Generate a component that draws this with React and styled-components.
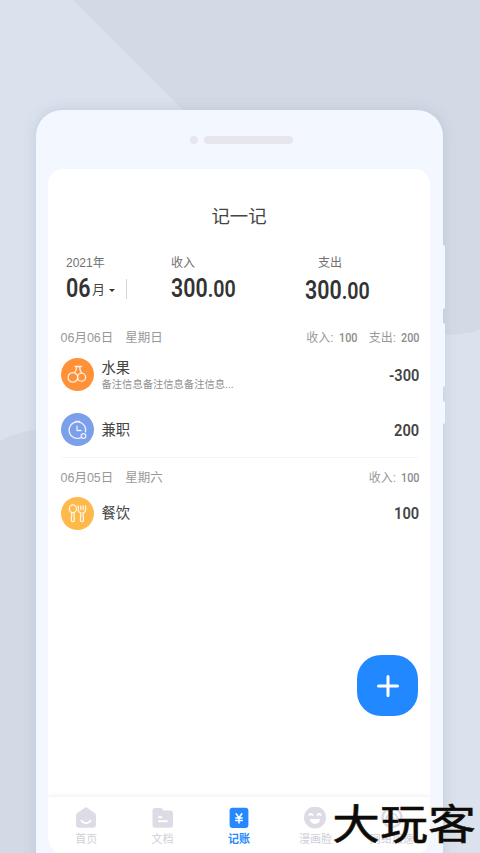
import React from 'react';
import styled, { createGlobalStyle } from 'styled-components';

const days = [
  {
    date: '06月06日',
    weekday: '星期日',
    totals: [
      { label: '收入:', value: '100' },
      { label: '支出:', value: '200' },
    ],
    records: [
      {
        icon: 'fruit',
        color: '#ff9138',
        name: '水果',
        note: '备注信息备注信息备注信息...',
        amount: '-300',
      },
      { icon: 'clock', color: '#7b9fea', name: '兼职', amount: '200' },
    ],
  },
  {
    date: '06月05日',
    weekday: '星期六',
    totals: [{ label: '收入:', value: '100' }],
    records: [{ icon: 'food', color: '#ffb94a', name: '餐饮', amount: '100' }],
  },
];

const tabs = [
  { icon: 'home', label: '首页' },
  { icon: 'folder', label: '文档' },
  { icon: 'money', label: '记账', active: true },
  { icon: 'face', label: '漫画脸' },
  { icon: 'speed', label: '网络加速' },
];

const recordIcons = {
  fruit: (
    <>
      <path d="M14 8.5h6.5M15.6 8.7c.1 2.5-.6 4.2-2 5.8M18.7 8.7c-.1 2.5.6 4.2 1.8 6" />
      <circle cx="11.9" cy="19.4" r="4.8" />
      <circle cx="20.6" cy="19.2" r="4" />
    </>
  ),
  clock: (
    <>
      <path d="M14.5 8.3h4M19.5 24.8a8.3 8.3 0 1 1 5-6" />
      <path d="M16 13.2v4.3h4" />
      <circle cx="22.5" cy="23" r="2.3" />
    </>
  ),
  food: (
    <>
      <ellipse cx="11.9" cy="11.8" rx="3.5" ry="3.9" />
      <path d="M10.8 15.8l-.5 7.2a1.5 1.5 0 0 0 3.1 0l-.5-7.2" />
      <path d="M17.3 9v4c0 1.7 1 2.6 2.6 2.9l-.5 7.1a1.5 1.5 0 0 0 3.1 0l-.5-7.1c1.6-.3 2.6-1.2 2.6-2.9V9M19.8 9v3.5M22.2 9v3.5" />
    </>
  ),
};

const tabIcons = {
  home: (
    <>
      <path
        d="M9.4.9a2.5 2.5 0 0 1 3.2 0l7 5.1c1 .7 1.4 1.5 1.4 2.6v9.2a3 3 0 0 1-3 3H4a3 3 0 0 1-3-3V8.6c0-1.1.4-1.9 1.4-2.6z"
        fill="currentColor"
      />
      <path d="M6.5 13.8c2 3.2 7 3.2 9 0" stroke="#fff" strokeWidth="2" />
    </>
  ),
  folder: (
    <>
      <path
        d="M3 1h5c1 0 1.7.3 2.3 1l1.2 1.6h7a2.5 2.5 0 0 1 2.5 2.5v12a2.7 2.7 0 0 1-2.7 2.7H3.2A2.7 2.7 0 0 1 .5 18V3.5A2.5 2.5 0 0 1 3 1z"
        fill="currentColor"
      />
      <path d="M7 10.3h2.5M7 14.3h8" stroke="#fff" strokeWidth="1.9" />
    </>
  ),
  money: (
    <>
      <rect x="1.6" y=".7" width="18.8" height="20.3" rx="3" fill="currentColor" />
      <path
        d="M8.2 6.8l2.8 3.9 2.8-3.9M11 10.7v5.3M7.8 11h6.400M7.8 13.6h6.4"
        stroke="#fff"
        strokeWidth="1.5"
      />
    </>
  ),
  face: (
    <>
      <circle cx="11" cy="10.5" r="11" fill="currentColor" />
      <path d="M6 12h10c-.2 6.5-9.8 6.5-10 0z" fill="#fff" />
      <path d="M5.3 8c.8-1.3 2.4-1.3 3.2 0M13.5 8c.8-1.3 2.4-1.3 3.2 0" stroke="#fff" strokeWidth="1.9" />
    </>
  ),
  speed: (
    <>
      <circle cx="11" cy="10.5" r="9.5" stroke="currentColor" strokeWidth="2.5" />
      <path d="M5.5 12a5.5 5.5 0 0 1 11 0" stroke="currentColor" strokeWidth="2" />
      <circle cx="11" cy="12" r="2.5" fill="currentColor" />
    </>
  ),
};

function DaySection({ day }) {
  return (
    <Day>
      <DayHeader>
        <DayDate>
          <span>{day.date}</span>
          <span>{day.weekday}</span>
        </DayDate>
        <Totals>
          {day.totals.map((total) => (
            <Total key={total.label}>
              {total.label}
              <TotalValue>{total.value}</TotalValue>
            </Total>
          ))}
        </Totals>
      </DayHeader>
      {day.records.map((record) => (
        <Record key={record.name}>
          <RecordIcon $color={record.color}>
            <svg width="33" height="33" viewBox="0 0 33 33">
              {recordIcons[record.icon]}
            </svg>
          </RecordIcon>
          <RecordText>
            <RecordName>{record.name}</RecordName>
            {record.note && <RecordNote>{record.note}</RecordNote>}
          </RecordText>
          <Amount>{record.amount}</Amount>
        </Record>
      ))}
    </Day>
  );
}

function App() {
  return (
    <>
      <GlobalStyle />
      <Page>
        <Phone>
          <SideKey $top={135} $height={64} />
          <SideKey $top={213} $height={64} />
          <SideKey $top={291} $height={23} />
          <Speaker>
            <Camera />
            <Slot />
          </Speaker>
          <Screen>
            <Title>记一记</Title>
            <Summary>
              <MonthPicker>
                <SummaryLabel>2021年</SummaryLabel>
                <Month>
                  <Digits>06</Digits>
                  <MonthUnit>月</MonthUnit>
                  <Caret />
                </Month>
              </MonthPicker>
              <SummaryItem $width={134}>
                <SummaryLabel>收入</SummaryLabel>
                <Sum>
                  300<small>.00</small>
                </Sum>
              </SummaryItem>
              <SummaryItem $width={100} $drop={2}>
                <SummaryLabel $indent={13}>支出</SummaryLabel>
                <Sum>
                  300<small>.00</small>
                </Sum>
              </SummaryItem>
            </Summary>
            <Records>
              {days.map((day) => (
                <DaySection key={day.date} day={day} />
              ))}
            </Records>
            <TabBar>
              {tabs.map((tab) => (
                <Tab key={tab.icon} $active={tab.active}>
                  <svg width="22" height="22" viewBox="0 0 22 22">
                    {tabIcons[tab.icon]}
                  </svg>
                  <span>{tab.label}</span>
                </Tab>
              ))}
            </TabBar>
            <AddButton aria-label="add">
              <svg width="24" height="24" viewBox="0 0 24 24">
                <path d="M12 2.5v19M2.5 12h19" />
              </svg>
            </AddButton>
          </Screen>
        </Phone>
        <Watermark>
          <span>大</span>
          <span>玩</span>
          <span>客</span>
        </Watermark>
      </Page>
    </>
  );
}

export default App;

const GlobalStyle = createGlobalStyle`
  * {
    box-sizing: border-box;
  }

  body {
    margin: 0;
    overflow: hidden;
    font-family: 'Liberation Sans', 'Noto Sans CJK SC', sans-serif;
    color: #444;
  }
`;

const Page = styled.main`
  position: relative;
  height: 853px;
  padding: 110px 37px 0 36px;
  overflow: hidden;
  background: #dbe2ed;

  &::before,
  &::after {
    content: '';
    position: absolute;
    background: #d3dae5;
  }

  &::before {
    left: 73px;
    top: 0;
    width: 474px;
    height: 335px;
    border-bottom-right-radius: 100px;
    clip-path: polygon(0 0, 100% 0, 100% 100%, 335px 100%);
  }

  &::after {
    left: -53px;
    top: 429px;
    width: 300px;
    height: 430px;
    border-top-left-radius: 100px;
  }
`;

const Phone = styled.section`
  position: relative;
  z-index: 1;
  height: 780px;
  padding: 0 12px;
  border-radius: 26px;
  background: #f3f7ff;
  box-shadow: 0 0 14px rgba(150, 172, 200, 0.4);
`;

const SideKey = styled.i`
  position: absolute;
  top: ${(props) => props.$top}px;
  right: -2px;
  width: 4px;
  height: ${(props) => props.$height}px;
  border-radius: 2px;
  background: #f3f7ff;
`;

const Speaker = styled.div`
  display: flex;
  align-items: center;
  justify-content: center;
  gap: 6px;
  height: 59px;
  padding-left: 4px;
`;

const Camera = styled.i`
  width: 8px;
  height: 8px;
  border-radius: 50%;
  background: #e7e6ec;
`;

const Slot = styled.i`
  width: 89px;
  height: 8px;
  border-radius: 4px;
  background: #e7e6ec;
`;

const Screen = styled.div`
  position: relative;
  display: flex;
  flex-direction: column;
  height: 687px;
  width: 382px;
  overflow: hidden;
  border-radius: 15px 15px 20px 20px;
  background: #fff;
`;

const Title = styled.h1`
  margin: 34px 0 0;
  font-size: 18.4px;
  line-height: 28px;
  font-weight: 400;
  text-align: center;
`;

const Summary = styled.header`
  display: flex;
  height: 93px;
  padding: 23px 18px 0;
`;

const MonthPicker = styled.div`
  position: relative;
  width: 105px;

  &::after {
    content: '';
    position: absolute;
    left: 60px;
    top: 25px;
    width: 1px;
    height: 20px;
    background: #d4d4d4;
  }
`;

const SummaryLabel = styled.div`
  height: 18px;
  padding-left: ${(props) => props.$indent || 0}px;
  font-size: 12px;
  line-height: 18px;
  color: #707070;
`;

const Digits = styled.span`
  width: 26px;
  font-family: Roboto, sans-serif;
  font-size: 25px;
  font-weight: 600;
  color: #333;
  transform: scaleX(0.86);
  transform-origin: left;
`;

const Month = styled.div`
  display: flex;
  align-items: center;
  height: 34px;
  line-height: 34px;
`;

const MonthUnit = styled.span`
  padding-top: 2px;
  font-size: 13px;
`;

const Caret = styled.i`
  margin: 3px 0 0 4px;
  border: 3px solid transparent;
  border-top: 3.5px solid #333;
  border-bottom: 0;
`;

const SummaryItem = styled.div`
  width: ${(props) => props.$width}px;

  > :last-child {
    margin-top: ${(props) => props.$drop || 0}px;
  }
`;

const Sum = styled.div`
  font-family: Roboto, sans-serif;
  font-size: 25px;
  font-weight: 600;
  line-height: 34px;
  color: #333;
  white-space: nowrap;
  transform: scaleX(0.855);
  transform-origin: left;

  small {
    font-size: 23px;
  }
`;

const Records = styled.div`
  flex: 1;
  padding: 0 11px 0 12.5px;
`;

const Day = styled.section`
  padding-top: 4px;

  &:not(:last-child) {
    border-bottom: 1px solid #f5f5f5;
  }

  & + & {
    padding-top: 10px;
  }

  & + & article {
    height: 52px;
  }
`;

const DayHeader = styled.div`
  display: flex;
  justify-content: space-between;
  height: 19px;
  line-height: 20px;
  color: #999;
`;

const DayDate = styled.div`
  display: flex;
  gap: 12px;
  font-size: 12.5px;
`;

const Totals = styled.div`
  display: flex;
  gap: 12px;
  font-size: 12px;
`;

const Total = styled.span`
  display: flex;
  gap: 5px;
`;

const TotalValue = styled.span`
  width: 18px;
  font-family: Roboto, sans-serif;
  font-weight: 500;
  color: #8c8c8c;
  transform: scaleX(0.9);
  transform-origin: left;
`;

const Record = styled.article`
  display: flex;
  align-items: center;
  height: 55px;
`;

const RecordIcon = styled.div`
  width: 33px;
  height: 33px;
  margin-right: 8px;
  border-radius: 50%;
  background: ${(props) => props.$color};

  svg {
    display: block;
    fill: none;
    stroke: #fff;
    stroke-opacity: 0.85;
    stroke-width: 1.3;
    stroke-linecap: round;
    stroke-linejoin: round;
  }
`;

const RecordText = styled.div`
  flex: 1;
`;

const RecordName = styled.div`
  font-size: 14.3px;
  line-height: 20px;
`;

const RecordNote = styled.div`
  font-size: 10.3px;
  line-height: 14px;
  color: #909090;
`;

const Amount = styled.div`
  font-family: Roboto, sans-serif;
  font-size: 17px;
  font-weight: 600;
  transform: scaleX(0.86);
  transform-origin: right;
`;

const TabBar = styled.nav`
  display: flex;
  height: 59px;
  background: #fff;
  box-shadow: 0 -1px 4px rgba(0, 0, 0, 0.07);
`;

const Tab = styled.div`
  flex: 1;
  display: flex;
  flex-direction: column;
  align-items: center;
  padding-top: 10px;
  font-size: 11px;
  font-weight: ${(props) => (props.$active ? 700 : 400)};
  line-height: 16px;
  white-space: nowrap;
  color: ${(props) => (props.$active ? '#2489ff' : '#dcdbe6')};

  svg {
    flex: none;
    margin-bottom: 2px;
    fill: none;
    stroke-linecap: round;
    stroke-linejoin: round;
  }

  span {
    color: ${(props) => (props.$active ? '#2489ff' : '#cfced9')};
  }
`;

const AddButton = styled.button`
  position: absolute;
  right: 12px;
  bottom: 140px;
  display: flex;
  align-items: center;
  justify-content: center;
  width: 61px;
  height: 61px;
  padding: 0;
  border: 0;
  border-radius: 24px;
  background: #2288ff;

  svg {
    stroke: #fff;
    stroke-width: 3;
    stroke-linecap: round;
  }
`;

const Watermark = styled.div`
  position: absolute;
  z-index: 2;
  left: 332px;
  top: 800px;
  display: flex;
  font-family: 'Noto Sans CJK SC', sans-serif;
  font-size: 44px;
  font-weight: 400;
  line-height: 44px;
  color: #0b0b0b;
  -webkit-text-stroke: 0.6px #0b0b0b;
  text-shadow: 0 0 1px #e6dfbd, 0 0 2px #e6dfbd;

  span {
    width: 48px;
    text-align: center;
    transform: scale(1.08, 0.92);
  }
`;
